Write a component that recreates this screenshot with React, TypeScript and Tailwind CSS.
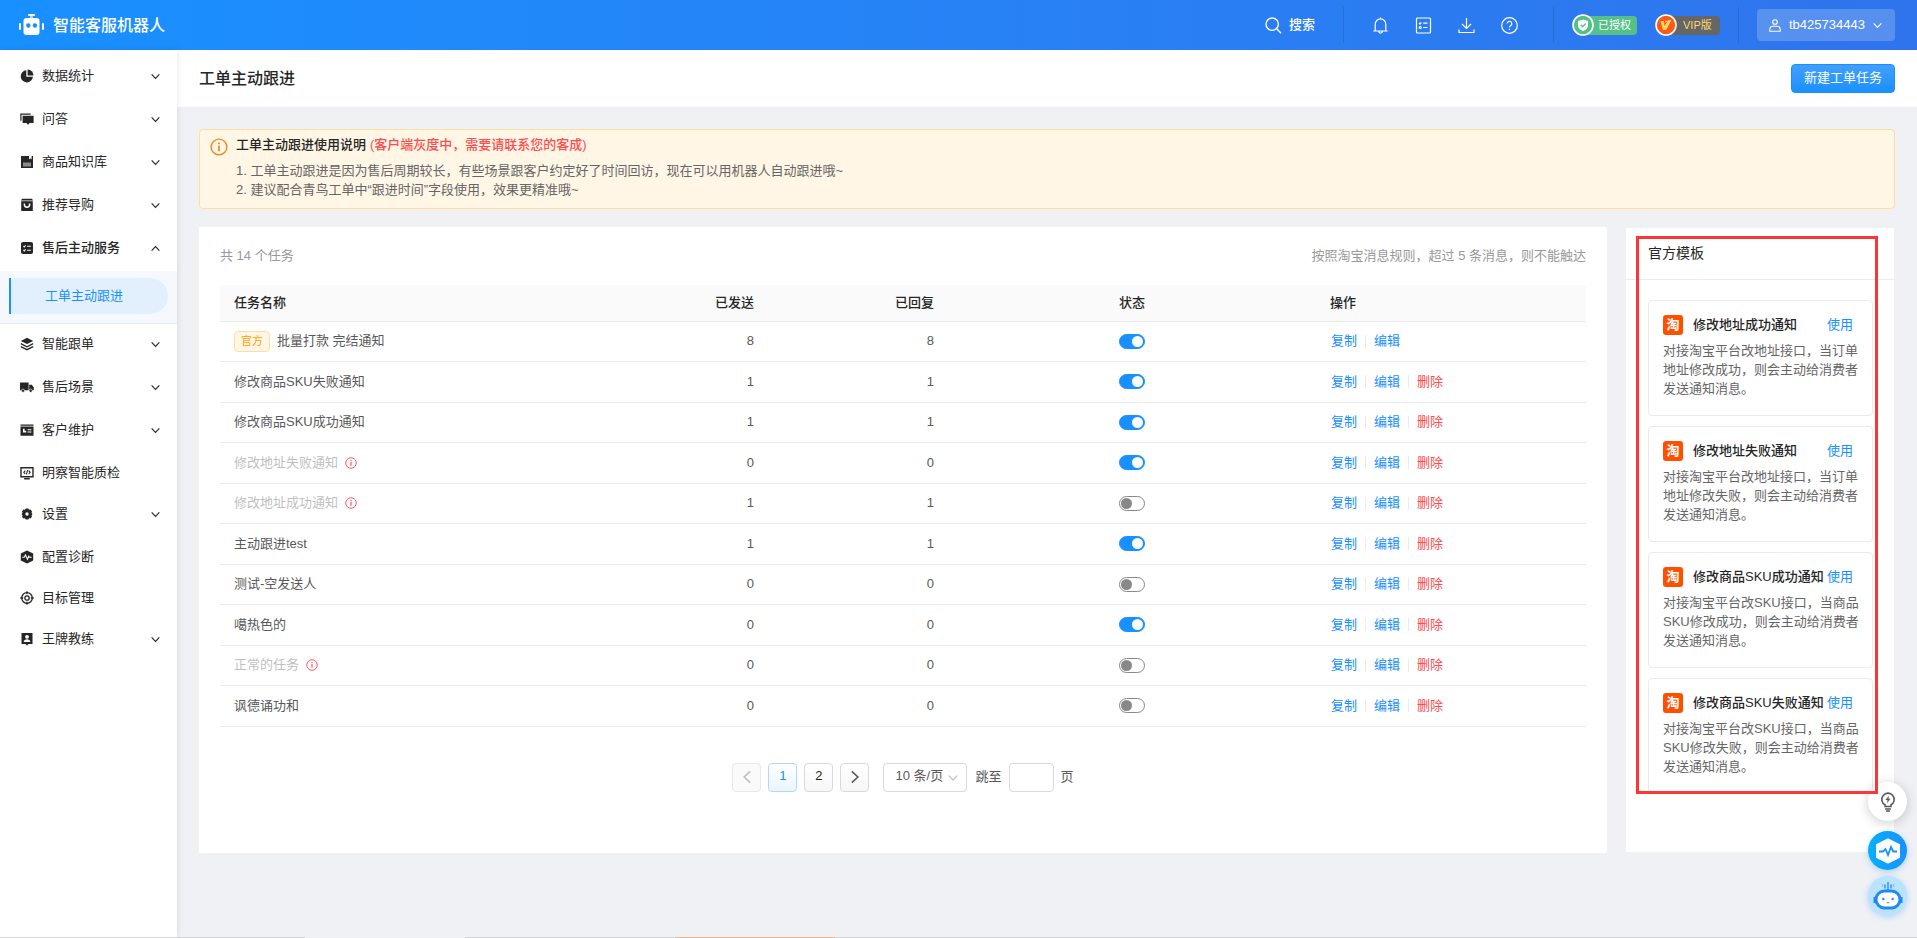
import { useState } from 'react'
import type { ReactNode } from 'react'
import clsx from 'clsx'

type NavItem = {
  label: string
  icon: ReactNode
  expandable: boolean
  children?: string[]
}

type Task = {
  id: number
  name: string
  sent: number
  replied: number
  enabled: boolean
  official?: boolean
  invalid?: boolean
}

type Template = {
  title: string
  desc: string
}

const navItems: NavItem[] = [
  {
    label: '数据统计',
    expandable: true,
    icon: (
      <>
        <path d="M6.3 1.2a6.1 6.1 0 1 0 6.6 6.6H6.3z" />
        <path d="M7.6.5v5.9h5.9A6 6 0 0 0 7.6.5z" />
      </>
    ),
  },
  {
    label: '问答',
    expandable: true,
    icon: (
      <>
        <path d="M.3 1.6h10.4v1.2H1.5v6H.3z" />
        <path d="M2.6 3.8h11v7.2H9.8l-1.7 1.7L6.4 11H2.6z" />
      </>
    ),
  },
  {
    label: '商品知识库',
    expandable: true,
    icon: (
      <>
        <path d="M1 1h12v12H1z" />
        <path d="M3 7.5h8v4H3z" fill="#8c8c8c" />
        <path d="M9 1h2.6v3.4L10.3 3.3 9 4.4z" fill="#fff" />
      </>
    ),
  },
  {
    label: '推荐导购',
    expandable: true,
    icon: (
      <>
        <path d="M2 .8h10l1 1.8H1z" />
        <path d="M1.2 3.2h11.6V13H1.2z" />
        <path d="M4.4 5.4v1.2a2.6 2.6 0 0 0 5.2 0V5.4" fill="none" stroke="#fff" strokeWidth="1.5" />
      </>
    ),
  },
  {
    label: '售后主动服务',
    expandable: true,
    children: ['工单主动跟进'],
    icon: (
      <>
        <rect x="1" y="1" width="12" height="12" rx="2" />
        <path d="M3.4 5.1l.9.9 1.3-1.6M3.4 9l.9.9 1.3-1.6M7.2 5.3h3.6M7.2 9.2h3.6" fill="none" stroke="#fff" strokeWidth="1.1" />
      </>
    ),
  },
  {
    label: '智能跟单',
    expandable: true,
    icon: (
      <>
        <path d="M7 .8l6.2 3.1L7 7 .8 3.9z" />
        <path d="M.8 6.7L7 9.8l6.2-3.1M.8 9.6L7 12.7l6.2-3.1" fill="none" stroke="#262626" strokeWidth="1.3" />
      </>
    ),
  },
  {
    label: '售后场景',
    expandable: true,
    icon: (
      <>
        <path d="M0 2.5h8.6v7.8H0z" />
        <path d="M9.2 4.7h2.6l2 2.7v2.9H9.2z" />
        <circle cx="3" cy="10.7" r="1.6" stroke="#fff" strokeWidth=".6" />
        <circle cx="10.7" cy="10.7" r="1.6" stroke="#fff" strokeWidth=".6" />
      </>
    ),
  },
  {
    label: '客户维护',
    expandable: true,
    icon: (
      <>
        <path d="M.5 1.5h13v1.2H.5zM.5 3.4h13v9.3H.5z" />
        <path d="M3 5.8h1.6v2h1.6v1.7H3zM7.6 6.2h3.8v1H7.6zM7.6 8.5h3.8v1H7.6z" fill="#fff" />
      </>
    ),
  },
  {
    label: '明察智能质检',
    expandable: false,
    icon: (
      <g fill="none" stroke="#262626" strokeWidth="1.4">
        <path d="M1 1.8h12v9H1zM4.2 12.7h5.6" />
        <path d="M5.3 4.6L3.8 6.3l1.5 1.7M8.7 4.6l1.5 1.7L8.7 8M7.7 4.2l-1.3 4.2" strokeWidth="1.1" />
      </g>
    ),
  },
  {
    label: '设置',
    expandable: true,
    icon: (
      <path
        fillRule="evenodd"
        d="M5.7 1.5h2.6l.7 1.3 1.5-.3 1.5 1.9-.5 1.3 1 1.3-1 1.4.5 1.4-1.6 1.8-1.4-.3-.7 1.3H5.7L5 11.300l-1.5.3L2 9.8l.5-1.4-1-1.400 1-1.300L2 4.400l1.500-1.900 1.500.3zM7 5.300a1.700 1.700 0 1 0 0 3.400 1.700 1.700 0 0 0 0-3.400z"
      />
    ),
  },
  {
    label: '配置诊断',
    expandable: false,
    icon: (
      <>
        <path d="M7 .4l6.2 3v7.2L7 13.6.8 10.6V3.4z" />
        <path d="M2.3 7.2h2l1.200-2.300 1.900 4.300 1.400-3 .6 1h2.300" fill="none" stroke="#fff" strokeWidth="1.1" />
      </>
    ),
  },
  {
    label: '目标管理',
    expandable: false,
    icon: (
      <g fill="none" stroke="#262626" strokeWidth="1.3">
        <circle cx="7" cy="7" r="5.3" />
        <circle cx="7" cy="7" r="2.2" />
        <path d="M7 .3v2.9M7 10.800v2.900M.3 7h2.900M10.800 7h2.900" />
      </g>
    ),
  },
  {
    label: '王牌教练',
    expandable: true,
    icon: (
      <>
        <path d="M1.5 1h11v11h-4L7 13.5 5.5 12h-4z" />
        <circle cx="7" cy="4.8" r="1.9" fill="#fff" />
        <path d="M3.6 9.900c.3-1.800 1.600-2.600 3.400-2.600s3.100.8 3.400 2.600z" fill="#fff" />
      </>
    ),
  },
]

const initialTasks: Task[] = [
  { id: 1, name: '批量打款 完结通知', sent: 8, replied: 8, enabled: true, official: true },
  { id: 2, name: '修改商品SKU失败通知', sent: 1, replied: 1, enabled: true },
  { id: 3, name: '修改商品SKU成功通知', sent: 1, replied: 1, enabled: true },
  { id: 4, name: '修改地址失败通知', sent: 0, replied: 0, enabled: true, invalid: true },
  { id: 5, name: '修改地址成功通知', sent: 1, replied: 1, enabled: false, invalid: true },
  { id: 6, name: '主动跟进test', sent: 1, replied: 1, enabled: true },
  { id: 7, name: '测试-空发送人', sent: 0, replied: 0, enabled: false },
  { id: 8, name: '噶热色的', sent: 0, replied: 0, enabled: true },
  { id: 9, name: '正常的任务', sent: 0, replied: 0, enabled: false, invalid: true },
  { id: 10, name: '讽德诵功和', sent: 0, replied: 0, enabled: false },
]

const templates: Template[] = [
  { title: '修改地址成功通知', desc: '对接淘宝平台改地址接口，当订单地址修改成功，则会主动给消费者发送通知消息。' },
  { title: '修改地址失败通知', desc: '对接淘宝平台改地址接口，当订单地址修改失败，则会主动给消费者发送通知消息。' },
  { title: '修改商品SKU成功通知', desc: '对接淘宝平台改SKU接口，当商品SKU修改成功，则会主动给消费者发送通知消息。' },
  { title: '修改商品SKU失败通知', desc: '对接淘宝平台改SKU接口，当商品SKU修改失败，则会主动给消费者发送通知消息。' },
]

function Chevron({ className }: { className?: string }) {
  return (
    <svg className={className} viewBox="0 0 10 10" fill="none" stroke="currentColor">
      <path d="M1.5 3L5 6.8 8.5 3" />
    </svg>
  )
}

function InfoIcon({ className }: { className?: string }) {
  return (
    <svg className={className} viewBox="0 0 18 18" fill="none" stroke="currentColor" strokeWidth="1.4">
      <circle cx="9" cy="9" r="7.9" />
      <path d="M9 7.6v5.6M9 4.6v1.6" strokeWidth="1.7" />
    </svg>
  )
}

function HeaderIcon({ label, children }: { label: string; children: ReactNode }) {
  return (
    <button type="button" aria-label={label} className="size-[17px]">
      <svg viewBox="0 0 17 17" className="size-[17px]" fill="none" stroke="currentColor" strokeWidth="1.2">
        {children}
      </svg>
    </button>
  )
}

function HeaderDivider() {
  return <span className="h-9 w-px bg-black/10" />
}

function Header() {
  return (
    <header className="flex h-[50px] shrink-0 items-center justify-between bg-linear-to-r from-[#1890ff] to-[#2f74ec] pr-[22px] pl-[19px] text-white">
      <div className="flex items-center gap-[9px]">
        <svg viewBox="0 0 25 22" className="h-[22px] w-[25px]" fill="#fff">
          <rect x="9" y="0" width="7" height="2" rx="1" />
          <rect x="11" y="1" width="3" height="3" opacity=".6" />
          <rect x="4.5" y="4" width="16" height="17" rx="3" />
          <rect x="0" y="9" width="2" height="7" rx="1" />
          <rect x="23" y="9" width="2" height="7" rx="1" />
          <circle cx="9.3" cy="11.5" r="2.2" fill="#1890ff" />
          <circle cx="15.9" cy="11.5" r="2.2" fill="#1890ff" />
        </svg>
        <span className="pt-px text-base font-medium">智能客服机器人</span>
      </div>
      <div className="flex items-center">
        <button type="button" className="mr-7 flex items-center gap-[7px] text-[13px] font-medium">
          <svg viewBox="0 0 17 17" className="size-[17px]" fill="none" stroke="currentColor" strokeWidth="1.4">
            <circle cx="7.2" cy="7.2" r="6.2" />
            <path d="M11.7 11.7l4.3 4.5" />
          </svg>
          搜索
        </button>
        <HeaderDivider />
        <div className="mr-[35px] ml-7 flex items-center gap-[26px]">
          <HeaderIcon label="通知">
            <path d="M3.2 13.8V7.2a5.3 5.3 0 0 1 10.6 0v6.6M1.3 14h14.4M8.5 1.8V.6M6.7 14.3a1.8 1.8 0 0 0 3.6 0" />
          </HeaderIcon>
          <HeaderIcon label="清单">
            <rect x="1.5" y="1" width="14" height="15" rx="1" />
            <path d="M4 6l1 1 1.4-1.7M8.2 6.2h4.3M8.2 10.5h4.3" />
            <circle cx="5.2" cy="10.5" r="1" />
          </HeaderIcon>
          <HeaderIcon label="下载">
            <path d="M8.5 1v10M4 7l4.5 4.5L13 7M1 12.5v3h15v-3" />
          </HeaderIcon>
          <HeaderIcon label="帮助">
            <circle cx="8.5" cy="8.5" r="7.8" />
            <path d="M6.2 6.6a2.3 2.3 0 1 1 3.4 2c-.8.4-1.1.8-1.1 1.7M8.5 11.8v1.3" />
          </HeaderIcon>
        </div>
        <HeaderDivider />
        <div className="mx-[18px] flex gap-[18px]">
          <div className="flex w-[65px] items-center">
            <svg viewBox="0 0 22 22" className="z-10 size-[22px] shrink-0">
              <circle cx="11" cy="11" r="10" fill="#55c088" stroke="#fff" strokeWidth="1.6" />
              <path d="M11 5.5l5 1.5v4.2c0 2.8-2 4.5-5 5.8-3-1.3-5-3-5-5.8V7z" fill="#fff" />
              <path d="M8.6 10.8l2 2 3.2-3.3" fill="none" stroke="#55c088" strokeWidth="1.3" />
            </svg>
            <span className="-ml-2 flex h-[19px] flex-1 items-center rounded bg-[#55c088] pl-3 text-[11px] whitespace-nowrap">已授权</span>
          </div>
          <div className="flex w-[65px] items-center">
            <svg viewBox="0 0 22 22" className="z-10 size-[22px] shrink-0">
              <circle cx="11" cy="11" r="10" fill="#ff5a14" stroke="#fff" strokeWidth="1.6" />
              <path d="M5.5 7h3.2l.8 5L13.500 6h3L11 16H8z" fill="#ffd66e" />
              <path d="M10.6 6.8h2.2l-.9 1.5h-2z" fill="#ffd66e" />
            </svg>
            <span className="-ml-2 flex h-[19px] flex-1 items-center rounded bg-[#666] pl-[14px] text-[11px] whitespace-nowrap text-[#ffd66e]">VIP版</span>
          </div>
        </div>
        <HeaderDivider />
        <button type="button" className="ml-[18px] flex h-8 w-[138px] items-center rounded bg-white/20 px-3">
          <svg viewBox="0 0 12 13" className="h-[13px] w-3" fill="none" stroke="currentColor" strokeWidth="1.1">
            <circle cx="6" cy="3" r="2.3" />
            <path d="M.8 12.2v-1.6c0-2 1.6-3.4 3.4-3.4h3.6c1.8 0 3.4 1.4 3.4 3.4v1.6z" />
          </svg>
          <span className="ml-2 flex-1 text-left text-[13px] font-medium">tb425734443</span>
          <Chevron className="size-[11px]" />
        </button>
      </div>
    </header>
  )
}

function Sidebar() {
  return (
    <nav className="z-10 w-[177px] shrink-0 bg-white pt-[6px] shadow-[0_0_6px_rgba(0,0,0,0.12)]">
      {navItems.map((item) => (
        <div key={item.label}>
          <button
            type="button"
            className={clsx(
              'flex h-10 w-full items-center pr-4 pl-5 text-[13px] text-[#262626]',
              item.expandable ? 'mb-[3px]' : 'mb-px',
              item.children && 'font-medium',
            )}
          >
            <svg viewBox="0 0 14 14" className="mr-2 size-[14px]" fill="#262626">
              {item.icon}
            </svg>
            <span className="flex-1 text-left">{item.label}</span>
            {item.expandable && <Chevron className={clsx('size-[11px]', item.children && 'rotate-180')} />}
          </button>
          {item.children && (
            <div className="border-b border-[#e6edf5] bg-[#f5f9fd] pt-[7px] pr-[9px] pb-[9px] pl-[9px]">
              {item.children.map((child) => (
                <a
                  key={child}
                  href="#"
                  className="flex h-9 items-center rounded-r-full border-l-2 border-[#1890ff] bg-[#e2f0fe] pl-[34px] text-[13px] text-[#1890ff]"
                >
                  {child}
                </a>
              ))}
            </div>
          )}
        </div>
      ))}
    </nav>
  )
}

function Notice() {
  return (
    <section className="flex rounded border border-[#ffdf9e] bg-[#fff6e5] px-[10px] pt-[5px] pb-[9px]">
      <InfoIcon className="mt-[3px] mr-2 size-[18px] shrink-0 text-[#ed8a19]" />
      <div>
        <h2 className="text-[13px] leading-[19px] font-medium text-[#262626]">
          工单主动跟进使用说明
          <span className="ml-1 text-[#ff4d4f]">(客户端灰度中，需要请联系您的客成)</span>
        </h2>
        <ol className="mt-[7px] text-[13px] leading-[19px] text-[#666]">
          <li>1. 工单主动跟进是因为售后周期较长，有些场景跟客户约定好了时间回访，现在可以用机器人自动跟进哦~</li>
          <li>2. 建议配合青鸟工单中“跟进时间”字段使用，效果更精准哦~</li>
        </ol>
      </div>
    </section>
  )
}

function TaskTable() {
  const [tasks, setTasks] = useState(initialTasks)

  const toggle = (id: number) => {
    setTasks(tasks.map((t) => (t.id === id ? { ...t, enabled: !t.enabled } : t)))
  }

  return (
    <table className="w-full table-fixed text-[13px] text-[#595959]">
      <thead>
        <tr className="h-9 border-b border-[#ebebeb] bg-[#fafafa] text-[#262626]">
          <th className="px-[14px] text-left font-medium">任务名称</th>
          <th className="w-[180px] px-[14px] text-right font-medium">已发送</th>
          <th className="w-[180px] px-[14px] text-right font-medium">已回复</th>
          <th className="px-[14px] text-center font-medium">状态</th>
          <th className="w-[270px] px-[14px] text-left font-medium">操作</th>
        </tr>
      </thead>
      <tbody>
        {tasks.map((task) => (
          <tr key={task.id} className="border-b border-[#ebebeb] odd:h-10 even:h-[41px]">
            <td className="px-[14px]">
              <div className="flex items-center">
                {task.official && (
                  <span className="mr-[7px] flex h-[21px] w-9 items-center justify-center rounded border border-[#ffdf9e] bg-[#fff6e5] text-[11px] text-[#ffa000]">
                    官方
                  </span>
                )}
                <span className={task.invalid ? 'text-[#bfbfbf]' : undefined}>{task.name}</span>
                {task.invalid && <InfoIcon className="ml-[7px] size-3 text-[#ff4d4f]" />}
              </div>
            </td>
            <td className="px-[14px] text-right">{task.sent}</td>
            <td className="px-[14px] text-right">{task.replied}</td>
            <td className="px-[14px]">
              <input
                type="checkbox"
                role="switch"
                aria-label={`${task.name}状态`}
                checked={task.enabled}
                onChange={() => toggle(task.id)}
                className="mx-auto block h-[15px] w-[26px] appearance-none rounded-full border border-[#888] bg-white p-px before:block before:size-[11px] before:rounded-full before:bg-[#888] checked:border-[#1890ff] checked:bg-[#1890ff] checked:before:ml-[11px] checked:before:bg-white"
              />
            </td>
            <td className="px-[14px]">
              <div className="flex items-center gap-2 pl-px text-[#1890ff]">
                <a href="#">复制</a>
                <span className="h-[13px] w-px bg-[#ebebeb]" />
                <a href="#">编辑</a>
                {!task.official && (
                  <>
                    <span className="h-[13px] w-px bg-[#ebebeb]" />
                    <a href="#" className="text-[#ff4d4f]">删除</a>
                  </>
                )}
              </div>
            </td>
          </tr>
        ))}
      </tbody>
    </table>
  )
}

function Pagination() {
  const [page, setPage] = useState(1)

  return (
    <div className="mt-9 flex items-center justify-center text-[13px] text-[#595959]">
      <div className="mr-[14px] flex gap-[7px]">
        <button
          type="button"
          aria-label="上一页"
          disabled={page === 1}
          onClick={() => setPage(page - 1)}
          className="flex size-[29px] items-center justify-center rounded border border-[#e8e8e8] bg-[#fafafa] text-[#bfbfbf]"
        >
          <Chevron className="size-4 rotate-90" />
        </button>
        {[1, 2].map((n) => (
          <button
            key={n}
            type="button"
            onClick={() => setPage(n)}
            className={clsx(
              'size-[29px] rounded border bg-linear-to-b pb-[2px]',
              n === page
                ? 'border-[#b5d6fb] from-white to-[#ebf5ff] text-[#1890ff]'
                : 'border-[#d9d9d9] from-white to-[#f7f7f7] text-[#262626]',
            )}
          >
            {n}
          </button>
        ))}
        <button
          type="button"
          aria-label="下一页"
          disabled={page === 2}
          onClick={() => setPage(page + 1)}
          className="flex size-[29px] items-center justify-center rounded border border-[#d9d9d9] bg-linear-to-b from-white to-[#f7f7f7] text-[#595959]"
        >
          <Chevron className="size-4 -rotate-90" />
        </button>
      </div>
      <div className="relative mr-2">
        <select aria-label="每页条数" className="h-[29px] w-[84px] appearance-none rounded border border-[#d9d9d9] bg-white pb-[2px] pl-[11px]">
          <option>10 条/页</option>
          <option>20 条/页</option>
          <option>50 条/页</option>
        </select>
        <Chevron className="pointer-events-none absolute top-[9px] right-2 size-3 text-[#bfbfbf]" />
      </div>
      <label className="flex items-center gap-[7px]">
        跳至
        <input type="text" className="h-[29px] w-[45px] rounded border border-[#d9d9d9] bg-white px-2" />
        页
      </label>
    </div>
  )
}

function TemplateCard({ template }: { template: Template }) {
  return (
    <article className="h-[116px] shrink-0 rounded border border-[#ebebeb] bg-white pt-[14px] pr-3 pl-[14px]">
      <div className="flex items-center">
        <span className="flex size-5 shrink-0 items-center justify-center rounded-[3px] bg-[#ff5000] text-[13px] font-bold text-white">淘</span>
        <h3 className="ml-[10px] flex-1 text-[13px] font-medium whitespace-nowrap text-[#262626]">{template.title}</h3>
        <a href="#" className="mr-[7px] shrink-0 text-[13px] text-[#1890ff]">使用</a>
      </div>
      <p className="mt-[6px] text-[13px] leading-[19px] text-[#666]">{template.desc}</p>
    </article>
  )
}

function TemplatePanel() {
  return (
    <aside className="relative my-px mr-px w-[268px] shrink-0 bg-white">
      <h2 className="flex h-[52px] items-center border-b border-[#ebebeb] pb-[2px] pl-[22px] text-sm text-[#262626]">官方模板</h2>
      <div className="flex h-[512px] flex-col gap-[10px] overflow-hidden pt-5 pr-[21px] pl-[22px]">
        {templates.map((t) => (
          <TemplateCard key={t.title} template={t} />
        ))}
      </div>
      {/* highlight around the template list */}
      <div className="pointer-events-none absolute top-2 left-[10px] z-30 h-[558px] w-[242px] border-3 border-[#fb3538]" />
    </aside>
  )
}

function FloatingTools() {
  return (
    <div className="fixed right-[10px] bottom-[23px] z-20 flex flex-col gap-[6px]">
      <button
        type="button"
        aria-label="建议"
        className="mb-1 flex size-[39px] items-center justify-center rounded-full bg-white shadow-[0_2px_12px_rgba(0,0,0,0.2)]"
      >
        <svg viewBox="0 0 16 20" className="h-5 w-4" fill="none" stroke="#595959" strokeWidth="1.6">
          <path d="M5 14.5v-1.7a6.2 6.2 0 1 1 6 0v1.7zM5 17h6M6 19h4" />
          <path d="M8.900 3.800L5.500 8h2l-.5 3.200 3.500-4.400h-2z" fill="#595959" stroke="none" />
        </svg>
      </button>
      <button
        type="button"
        aria-label="诊断"
        className="flex size-[39px] items-center justify-center rounded-full bg-linear-to-r from-[#05b0fb] to-[#1890ff] shadow-[0_2px_6px_rgba(24,144,255,0.3)]"
      >
        <svg viewBox="0 0 26 26" className="size-[26px]">
          <path d="M13 1.5l11 5.3v12.400l-11 5.300-11-5.300V6.800z" fill="#fff" stroke="#fff" strokeWidth="2" strokeLinejoin="round" />
          <path d="M4 13.500h4l2.500-2.500 2.500 6 3-8 2.300 4.500H22" fill="none" stroke="#1890ff" strokeWidth="1.8" />
        </svg>
      </button>
      <button
        type="button"
        aria-label="机器人助手"
        className="flex size-[39px] items-center justify-center rounded-full bg-[#b9e3ff] shadow-[0_2px_6px_rgba(24,144,255,0.3)]"
      >
        <svg viewBox="0 0 30 30" className="size-[30px]" fill="none">
          <path d="M15 1v8M12 3.500v4M18 3.500v4" stroke="#1e88f7" strokeWidth="1.3" />
          <path d="M9.500 3v3M20.500 3v3" stroke="#7fc1fb" strokeWidth="1.2" />
          <rect x="3" y="10" width="24" height="17" rx="8.5" fill="#fff" stroke="#1e88f7" strokeWidth="3" />
          <path d="M1.500 16v6M28.500 16v6" stroke="#1e88f7" strokeWidth="2" />
          <circle cx="10.3" cy="18" r="1.2" fill="#1e88f7" />
          <circle cx="19.7" cy="18" r="1.2" fill="#1e88f7" />
          <path d="M13.800 21h2.400L15 22.700z" fill="#1e88f7" />
        </svg>
      </button>
    </div>
  )
}

export default function App() {
  return (
    <div className="flex min-h-screen flex-col bg-[#eff1f5] font-['Liberation_Sans','Noto_Sans_CJK_SC',sans-serif]">
      <Header />
      <div className="flex flex-1">
        <Sidebar />
        <main className="min-w-0 flex-1">
          <div className="flex h-[57px] items-center justify-between bg-white px-[22px]">
            <h1 className="text-base font-medium text-[#262626]">工单主动跟进</h1>
            <button
              type="button"
              className="h-[29px] w-[104px] rounded border border-[#1890ff] bg-linear-to-b from-[#40a0ff] to-[#1890ff] pb-[2px] text-[13px] text-white"
            >
              新建工单任务
            </button>
          </div>
          <div className="px-[22px] pt-[22px]">
            <Notice />
            <div className="mt-[18px] flex gap-[19px]">
              <section className="min-w-0 flex-1 bg-white px-[21px] pt-[19px] pb-[61px]">
                <div className="mb-5 flex justify-between text-[13px] leading-[19px] text-[#999]">
                  <span>共 14 个任务</span>
                  <span>按照淘宝消息规则，超过 5 条消息，则不能触达</span>
                </div>
                <TaskTable />
                <Pagination />
              </section>
              <TemplatePanel />
            </div>
          </div>
        </main>
      </div>
      <footer className="z-20 flex h-px">
        <span className="w-[305px] bg-[#d2d4d7]" />
        <span className="w-40 bg-[#eceef1]" />
        <span className="w-[210px] bg-[#d2d4d7]" />
        <span className="w-40 bg-[#f0b27e]" />
        <span className="flex-1 bg-[#d2d4d7]" />
      </footer>
      <FloatingTools />
    </div>
  )
}
